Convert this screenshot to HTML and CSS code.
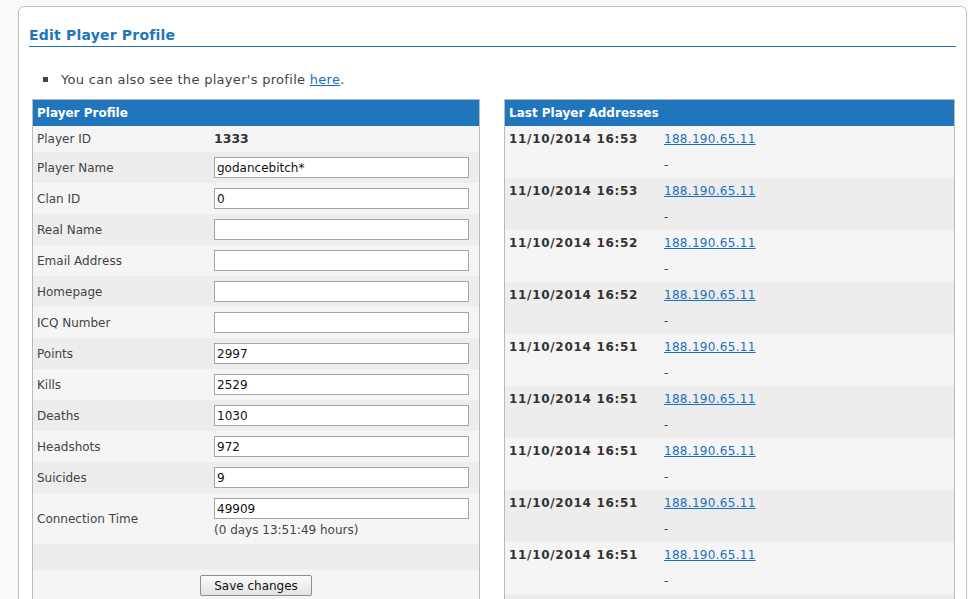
FILE: index.html
```html
<!DOCTYPE html>
<html lang="en">
<head>
  <meta charset="UTF-8" />
  <title>Edit Player Profile</title>
  <link rel="stylesheet" href="styles.css">
</head>
<body>

<div class="panel">
  <h2 class="panel-title">Edit Player Profile</h2>

  <ul class="notes">
    <li>You can also see the player's profile <a href="#">here</a>.</li>
  </ul>

  <div class="columns">

    <form class="profile">
      <table class="grid">
        <tr><th colspan="2">Player Profile</th></tr>
        <tr class="odd"><td class="label">Player ID</td><td class="text"><b>1333</b></td></tr>
        <tr class="even"><td class="label">Player Name</td><td><input type="text" value="godancebitch*"></td></tr>
        <tr class="odd"><td class="label">Clan ID</td><td><input type="text" value="0"></td></tr>
        <tr class="even"><td class="label">Real Name</td><td><input type="text" value=""></td></tr>
        <tr class="odd"><td class="label">Email Address</td><td><input type="text" value=""></td></tr>
        <tr class="even"><td class="label">Homepage</td><td><input type="text" value=""></td></tr>
        <tr class="odd"><td class="label">ICQ Number</td><td><input type="text" value=""></td></tr>
        <tr class="even"><td class="label">Points</td><td><input type="text" value="2997"></td></tr>
        <tr class="odd"><td class="label">Kills</td><td><input type="text" value="2529"></td></tr>
        <tr class="even"><td class="label">Deaths</td><td><input type="text" value="1030"></td></tr>
        <tr class="odd"><td class="label">Headshots</td><td><input type="text" value="972"></td></tr>
        <tr class="even"><td class="label">Suicides</td><td><input type="text" value="9"></td></tr>
        <tr class="odd">
          <td class="label">Connection Time</td>
          <td class="time">
            <input type="text" value="49909">
            <div class="hint">(0 days 13:51:49 hours)</div>
          </td>
        </tr>
        <tr class="even"><td class="spacer" colspan="2"></td></tr>
        <tr class="odd"><td class="actions" colspan="2"><button type="button">Save changes</button></td></tr>
      </table>
    </form>

    <table class="grid addresses">
      <tr><th colspan="2">Last Player Addresses</th></tr>
      <tr class="odd"><td class="date">11/10/2014 16:53</td><td class="addr"><a href="#">188.190.65.11</a><div>-</div></td></tr>
      <tr class="even"><td class="date">11/10/2014 16:53</td><td class="addr"><a href="#">188.190.65.11</a><div>-</div></td></tr>
      <tr class="odd"><td class="date">11/10/2014 16:52</td><td class="addr"><a href="#">188.190.65.11</a><div>-</div></td></tr>
      <tr class="even"><td class="date">11/10/2014 16:52</td><td class="addr"><a href="#">188.190.65.11</a><div>-</div></td></tr>
      <tr class="odd"><td class="date">11/10/2014 16:51</td><td class="addr"><a href="#">188.190.65.11</a><div>-</div></td></tr>
      <tr class="even"><td class="date">11/10/2014 16:51</td><td class="addr"><a href="#">188.190.65.11</a><div>-</div></td></tr>
      <tr class="odd"><td class="date">11/10/2014 16:51</td><td class="addr"><a href="#">188.190.65.11</a><div>-</div></td></tr>
      <tr class="even"><td class="date">11/10/2014 16:51</td><td class="addr"><a href="#">188.190.65.11</a><div>-</div></td></tr>
      <tr class="odd"><td class="date">11/10/2014 16:51</td><td class="addr"><a href="#">188.190.65.11</a><div>-</div></td></tr>
      <tr class="even"><td class="date">11/10/2014 16:50</td><td class="addr"><a href="#">188.190.65.11</a><div>-</div></td></tr>
    </table>

  </div>
</div>

</body>
</html>
```

FILE: styles.css
```css
body {
  background: #fafafa;
  color: #444;
  font-family: 'DejaVu Sans', Verdana, sans-serif;
  font-size: 12px;
  margin: 0;
  padding: 6px 0 0 18px;
}
.panel {
  width: 927px;
  min-height: 700px;
  background: #fff;
  border: 1px solid #c0c0c0;
  border-radius: 6px 6px 0 0;
  padding: 0 10px;
}
.panel-title {
  margin: 20px 0 0;
  padding-bottom: 2px;
  font-size: 14px;
  line-height: 17px;
  letter-spacing: 0.2px;
  color: #2175bc;
  border-bottom: 1px solid #2175bc;
}
.notes {
  list-style: none;
  margin: 24px 0 10px;
  padding-left: 32px;
  font-size: 13px;
  line-height: 18px;
  letter-spacing: 0.3px;
}
.notes li::before {
  content: "";
  display: inline-block;
  width: 5px;
  height: 5px;
  background: #444;
  margin: 0 13px 2px -18px;
  vertical-align: middle;
}
a {
  color: #1a6fbf;
}
.columns {
  display: flex;
  align-items: flex-start;
  gap: 24px;
  padding-left: 3px;
}
.profile {
  margin: 0;
}
.grid {
  border: 1px solid #bbb;
  border-spacing: 0;
  width: 448px;
}
.grid th {
  background: #2175bc;
  color: #fff;
  text-align: left;
  height: 26px;
  padding: 0 4px;
  font-size: 12px;
}
.grid td {
  padding: 5px 4px;
  line-height: 16px;
  vertical-align: middle;
}
.grid .odd {
  background: #f5f5f5;
}
.grid .even {
  background: #ededed;
}
.grid .label {
  width: 169px;
}
.grid .text b {
  color: #333;
  font-size: 12.5px;
}
.grid input {
  display: block;
  box-sizing: border-box;
  width: 255px;
  height: 21px;
  margin: 0;
  padding: 0 2px;
  border: 1px solid #a5a5a5;
  background: #fff;
  color: #111;
  font-family: 'DejaVu Sans', sans-serif;
  font-size: 12px;
}
.grid .hint {
  margin-top: 3px;
  padding-bottom: 1px;
}
.grid .spacer {
  height: 16px;
}
.grid .actions {
  text-align: center;
  padding: 5px 4px;
}
.grid button {
  width: 112px;
  height: 21px;
  padding: 0;
  font-family: 'DejaVu Sans', sans-serif;
  font-size: 12px;
  color: #111;
  background: linear-gradient(#fbfbfb, #e3e3e3);
  border: 1px solid #8f8f8f;
  border-radius: 2px;
}
.addresses {
  width: 451px;
}
.addresses td {
  padding: 0 4px;
  line-height: 26px;
  vertical-align: top;
}
.addresses .date {
  width: 147px;
  font-weight: bold;
  color: #333;
  letter-spacing: 0.7px;
}
.addresses .addr {
  letter-spacing: 0.3px;
}
```
